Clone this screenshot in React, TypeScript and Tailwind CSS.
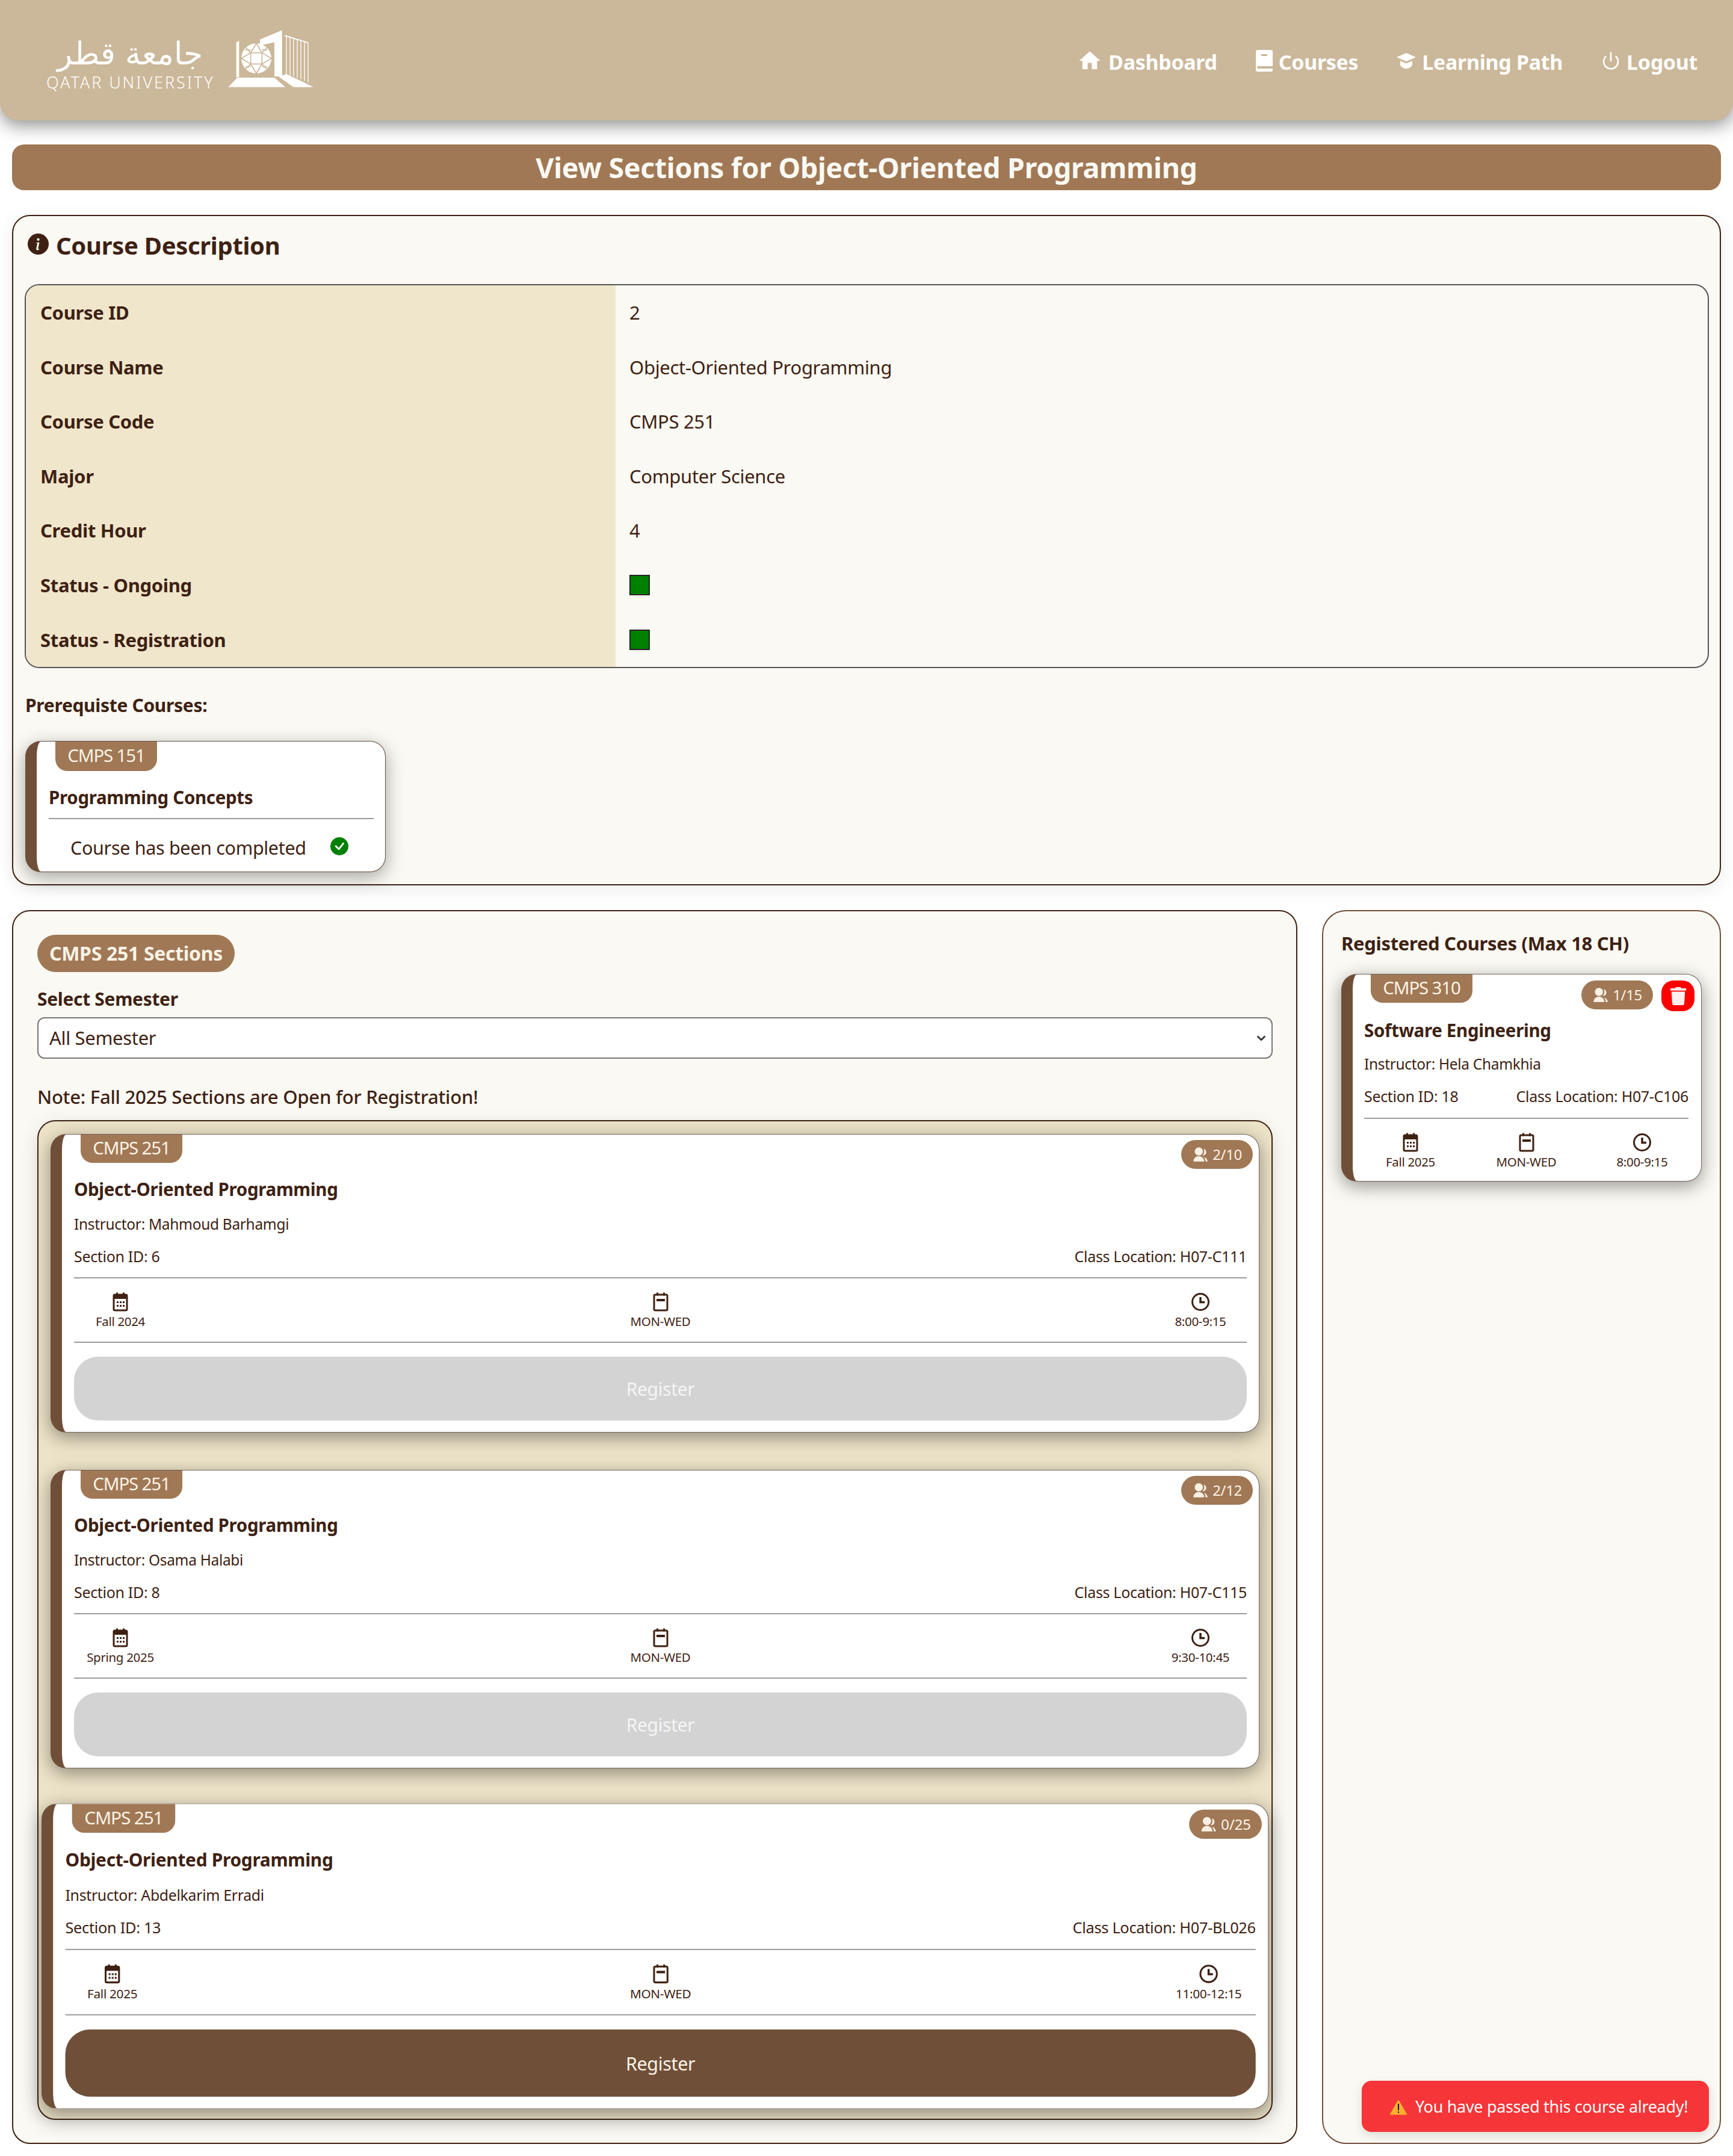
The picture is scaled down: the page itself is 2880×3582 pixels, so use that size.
import React from "react";
import { ChevronDown, Power } from "lucide-react";
import { BsInfoCircleFill, BsCheckCircleFill } from "react-icons/bs";
import { FaTrash } from "react-icons/fa";
import { MdHome } from "react-icons/md";
import { RiGroupFill } from "react-icons/ri";

// Calendar with the little date grid
const CalendarGrid = ({ size = 32 }: { size?: number }) => (
  <svg width={size} height={size} viewBox="0 0 32 32" fill="none">
    <rect x="5" y="4" width="22" height="26" rx="2" stroke="#3E2112" strokeWidth="3" />
    <rect x="5" y="4" width="22" height="7" fill="#3E2112" />
    <rect x="9" y="0.5" width="3" height="5" fill="#3E2112" />
    <rect x="20" y="0.5" width="3" height="5" fill="#3E2112" />
    <g fill="#3E2112">
      <rect x="10" y="15" width="3" height="3" />
      <rect x="15" y="15" width="3" height="3" />
      <rect x="20" y="15" width="3" height="3" />
      <rect x="10" y="21" width="3" height="3" />
      <rect x="15" y="21" width="3" height="3" />
      <rect x="20" y="21" width="3" height="3" />
    </g>
  </svg>
);

// Calendar with one bar, used for the days
const CalendarBar = ({ size = 32 }: { size?: number }) => (
  <svg width={size} height={size} viewBox="0 0 32 32" fill="none">
    <rect x="5" y="4" width="22" height="26" rx="2" stroke="#3E2112" strokeWidth="3" />
    <rect x="9" y="0.5" width="3" height="5" fill="#3E2112" />
    <rect x="20" y="0.5" width="3" height="5" fill="#3E2112" />
    <rect x="9" y="11" width="14" height="4" fill="#3E2112" />
  </svg>
);

const ClockIcon = ({ size = 32 }: { size?: number }) => (
  <svg width={size} height={size} viewBox="0 0 32 32" fill="none">
    <circle cx="16" cy="16" r="13.5" stroke="#3E2112" strokeWidth="3" />
    <path d="M16 8v8.5h7" stroke="#3E2112" strokeWidth="3.5" />
  </svg>
);

const BookIcon = () => (
  <svg width="28" height="36" viewBox="0 0 28 36" fill="white">
    <path d="M3 0h22a3 3 0 0 1 3 3v24H4a2 2 0 0 0 0 4h24v3a2 2 0 0 1-2 2H3a3 3 0 0 1-3-3V3a3 3 0 0 1 3-3z" />
    <rect x="9" y="7" width="10" height="3" fill="#CBB799" />
  </svg>
);

// Cap without the tassel: a diamond over a bowl
const CapIcon = () => (
  <svg width="32" height="26" viewBox="0 0 32 26" fill="white">
    <path d="M16 0 32 7 16 14 0 7z" />
    <path d="M6 13l10 4.5L26 13v7c-2 4-7 6-10 6s-8-2-10-6z" />
  </svg>
);

const WarningIcon = () => (
  <svg width="30" height="26" viewBox="0 0 30 26">
    <path d="M15 1 29 25H1z" fill="#FFB02E" stroke="#FFB02E" strokeLinejoin="round" />
    <rect x="14" y="7" width="2" height="11" fill="#111" />
    <rect x="14" y="20" width="2" height="2.5" fill="#111" />
  </svg>
);

// University emblem, coordinates taken from the reference crop
const Emblem = () => (
  <svg width="148" height="100" viewBox="940 25 444 300" fill="white">
    <path d="M1108 78 1218 32V262H1180V92L1108 108z" />
    <path d="M990 92 1004 85V266H990z" />
    <path d="M950 315 995 268H1180L1235 315z" />
    <path d="M1200 262 1240 250 1375 315H1275z" />
    <path d="M1232 55 1350 92V97L1232 62z" />
    <g stroke="white" strokeWidth="4">
      <path d="M1240 60V250M1258 66V255M1276 72V262M1294 78V270M1312 84V276M1330 90V284M1348 94V292" />
    </g>
    <circle cx="1090" cy="172" r="75" />
    <g stroke="#CBB799" strokeWidth="5" fill="none">
      <rect x="1062" y="144" width="56" height="56" />
      <path d="M1090 97 1062 144 1015 172 1062 200 1090 247 1118 200 1165 172 1118 144z" />
      <path d="M1037 119 1062 144M1143 119 1118 144M1037 225 1062 200M1143 225 1118 200" />
      <path d="M1035 130H1062M1118 130H1145M1035 214H1062M1118 214H1145" />
    </g>
  </svg>
);

const Logo = () => (
  <div className="self-start h-[100px] flex items-start ml-[77px] mt-[48px] gap-[21px] text-white">
    <div className="w-[278px] mt-[10px]">
      <div dir="rtl" lang="ar" className="h-[62px] text-[52px] leading-[62px] font-extralight text-center whitespace-nowrap [font-family:'DejaVu_Sans',sans-serif]">
        جامعة قطر
      </div>
      <div className="mt-[3px] text-[27px] leading-[28px] font-light tracking-[2.9px] whitespace-nowrap">QATAR UNIVERSITY</div>
    </div>
    <Emblem />
  </div>
);

const NavItem = ({ icon, label }: { icon: React.ReactNode; label: string }) => (
  <div className="flex items-center gap-[10px] text-white">
    <span className="-mt-[4px]">{icon}</span>
    <span className="text-[34px] font-bold">{label}</span>
  </div>
);

const Row = ({ label, children }: { label: string; children: React.ReactNode }) => (
  <div className="flex h-[90.6px]">
    <div className="w-[980px] bg-[#F0E6CC] pl-[24px] flex items-center text-[31px] font-bold">{label}</div>
    <div className="flex-1 pl-[23px] flex items-center text-[31px]">{children}</div>
  </div>
);

const StatusBox = () => <div className="w-[34px] h-[34px] bg-[#008000] border-2 border-[#222]" />;

const MetaItem = ({ icon, label }: { icon: React.ReactNode; label: string }) => (
  <div className="w-[154px] flex flex-col items-center">
    {icon}
    <span className="text-[20.5px] leading-[32px] whitespace-nowrap">{label}</span>
  </div>
);

const Pill = ({ count }: { count: string }) => (
  <div className="h-[48px] px-[18px] rounded-full bg-[#A07855] text-[#FAF3E6] text-[24px] flex items-center gap-[7px]">
    <RiGroupFill size={27} color="#FAEFE3" />
    {count}
  </div>
);

const CodeBadge = ({ code, tall }: { code: string; tall?: boolean }) => (
  <div
    className={`ml-[11px] w-[169px] pb-[3px] rounded-b-[20px] bg-[#A07855] text-[#FAF3E6] text-[29.5px] tracking-[-0.04em] flex items-center justify-center ${
      tall ? "h-[49px]" : "h-[47px]"
    }`}
  >
    {code}
  </div>
);

type Section = {
  instructor: string;
  id: number;
  location: string;
  semester: string;
  time: string;
  count: string;
  open?: boolean;
};

const SectionCard = ({ s }: { s: Section }) => (
  <div
    className={`rounded-[26px] bg-white border border-[#3E2112]/70 border-l-[19px] border-l-[#704F39] shadow-[0_8px_30px_rgba(0,0,0,0.4)] pl-[20px] pr-[20px] pb-[19px] ${
      s.open ? "scale-[1.015]" : ""
    }`}
  >
    <div className="flex justify-between h-[47px]">
      <CodeBadge code="CMPS 251" />
      <div className="mt-[9px] -mr-[10px]">
        <Pill count={s.count} />
      </div>
    </div>
    <div className="mt-[22px] h-[44px] leading-[44px] text-[29.5px] font-bold">Object-Oriented Programming</div>
    <div className="mt-[18px] h-[36px] leading-[36px] text-[24.5px]">Instructor: {s.instructor}</div>
    <div className="mt-[17px] h-[36px] leading-[36px] text-[25px] flex justify-between">
      <span>Section ID: {s.id}</span>
      <span>Class Location: {s.location}</span>
    </div>
    <div className="mt-[17px] h-[2px] bg-[#9b9b9b]" />
    <div className="mt-[23px] flex justify-between">
      <MetaItem icon={<CalendarGrid />} label={s.semester} />
      <MetaItem icon={<CalendarBar />} label="MON-WED" />
      <MetaItem icon={<ClockIcon />} label={s.time} />
    </div>
    <div className="mt-[18px] h-[2px] bg-[#9b9b9b]" />
    <button
      className={`mt-[23px] w-full rounded-[40px] text-[30px] ${
        s.open ? "h-[110px] bg-[#704F39] text-[#FAF3E6]" : "h-[106px] bg-[#D3D3D3] text-[#F5F5F5]"
      }`}
    >
      Register
    </button>
  </div>
);

const sections: Section[] = [
  { instructor: "Mahmoud Barhamgi", id: 6, location: "H07-C111", semester: "Fall 2024", time: "8:00-9:15", count: "2/10" },
  { instructor: "Osama Halabi", id: 8, location: "H07-C115", semester: "Spring 2025", time: "9:30-10:45", count: "2/12" },
  { instructor: "Abdelkarim Erradi", id: 13, location: "H07-BL026", semester: "Fall 2025", time: "11:00-12:15", count: "0/25", open: true },
];

const App: React.FC = () => {
  return (
    <div className="relative w-[2880px] h-[3582px] bg-white text-[#3E2112] tracking-[-0.02em] [font-family:'Noto_Sans',sans-serif]">
      {/* Navbar */}
      <div className="h-[200px] bg-[#CBB799] rounded-b-[30px] shadow-[0_8px_30px_rgba(0,0,0,0.45)] flex justify-between">
        <Logo />
        <div className="flex items-center gap-[64px] pr-[59px] pt-[6px]">
          <NavItem icon={<MdHome size={42} />} label="Dashboard" />
          <NavItem icon={<BookIcon />} label="Courses" />
          <NavItem icon={<CapIcon />} label="Learning Path" />
          <NavItem icon={<Power size={32} strokeWidth={2} />} label="Logout" />
        </div>
      </div>

      {/* Page title */}
      <div className="mt-[40px] mx-[20px] h-[76px] pt-[2px] rounded-[20px] bg-[#A07855] text-[#FAF9F3] text-[46.5px] font-bold flex items-center justify-center">
        View Sections for Object-Oriented Programming
      </div>

      {/* Course description */}
      <div className="mt-[41px] mx-[20px] h-[1114px] rounded-[30px] border-2 border-[#3E2112] bg-[#FAF9F3] pl-[19px] pr-[18px] shadow-[0_8px_30px_rgba(0,0,0,0.08)]">
        <div className="h-[98px] mb-[15px] pl-[5px] flex items-center gap-[12px] text-[40px] font-bold">
          <BsInfoCircleFill size={35} className="-mt-[6px]" />
          Course Description
        </div>
        <div className="rounded-[24px] border-2 border-[#555] overflow-hidden bg-[#FAF9F3]">
          <Row label="Course ID">2</Row>
          <Row label="Course Name">Object-Oriented Programming</Row>
          <Row label="Course Code">CMPS 251</Row>
          <Row label="Major">Computer Science</Row>
          <Row label="Credit Hour">4</Row>
          <Row label="Status - Ongoing"><StatusBox /></Row>
          <Row label="Status - Registration"><StatusBox /></Row>
        </div>
        <div className="mt-[40px] h-[44px] leading-[44px] pl-[1px] text-[30px] font-bold">Prerequiste Courses:</div>
        <div className="mt-[37px] ml-[1px] w-[599px] h-[218px] rounded-[26px] bg-white border border-[#3E2112]/80 border-l-[19px] border-l-[#704F39] shadow-[0_8px_30px_rgba(0,0,0,0.35)] pl-[20px] pr-[19px]">
          <CodeBadge code="CMPS 151" tall />
          <div className="mt-[23px] h-[42px] leading-[42px] text-[29.5px] font-bold">Programming Concepts</div>
          <div className="mt-[13px] h-[2px] bg-[#9b9b9b]" />
          <div className="mt-[25px] pl-[36px] flex items-center gap-[40px] text-[30.5px]">
            <span>Course has been completed</span>
            <BsCheckCircleFill size={30} color="#008000" className="-mt-[6px]" />
          </div>
        </div>
      </div>

      <div className="mt-[41px] mx-[20px] flex gap-[41px]">
        {/* Sections list */}
        <div className="w-[2136px] h-[2050px] rounded-[30px] border-2 border-[#3E2112] bg-[#FAF9F3] pt-[39px] pl-[40px] pr-[39px]">
          <div className="w-fit h-[62px] px-[20px] rounded-full bg-[#A07855] text-[#FAF3E6] text-[32px] font-bold flex items-center">
            CMPS 251 Sections
          </div>
          <div className="mt-[23px] h-[44px] leading-[44px] text-[30px] font-bold">Select Semester</div>
          <div className="relative mt-[8px]">
            <select className="appearance-none w-full h-[69px] rounded-[12px] border-2 border-[#777] bg-white pl-[18px] text-[31px]">
              <option>All Semester</option>
            </select>
            <ChevronDown size={22} strokeWidth={3} color="#333" className="absolute right-[8px] top-[24px]" />
          </div>
          <div className="mt-[41px] h-[44px] leading-[44px] text-[31.2px] font-medium">Note: Fall 2025 Sections are Open for Registration!</div>
          <div className="mt-[17px] rounded-[30px] border-2 border-[#3E2112] bg-[#EDE3C8] pt-[21px] pb-[20px] pl-[20px] pr-[20px] flex flex-col gap-[62px] shadow-[0_8px_30px_rgba(0,0,0,0.12)]">
            {sections.map((s) => (
              <SectionCard key={s.id} s={s} />
            ))}
          </div>
        </div>

        {/* Registered courses */}
        <div className="relative w-[663px] h-[2050px] rounded-[40px] border-2 border-[#704F39] bg-[#FAF9F3] pl-[30px] pr-[30px]">
          <div className="mt-[31px] h-[44px] leading-[44px] text-[31px] font-bold whitespace-nowrap">Registered Courses (Max 18 CH)</div>
          <div className="mt-[29px] w-[599px] h-[345px] rounded-[26px] bg-white border border-[#3E2112]/70 border-l-[19px] border-l-[#704F39] shadow-[0_8px_30px_rgba(0,0,0,0.4)] pl-[19px] pr-[21px]">
            <div className="flex h-[48px]">
              <CodeBadge code="CMPS 310" />
              <div className="ml-auto mt-[10px] flex gap-[14px] -mr-[10px]">
                <Pill count="1/15" />
                <div className="w-[55px] h-[51px] rounded-[20px] bg-[#FF0000] flex items-center justify-center">
                  <FaTrash size={30} color="#FFF0F0" />
                </div>
              </div>
            </div>
            <div className="mt-[23px] h-[44px] leading-[44px] text-[29.5px] font-bold">Software Engineering</div>
            <div className="mt-[16px] h-[36px] leading-[36px] text-[24.5px]">Instructor: Hela Chamkhia</div>
            <div className="mt-[17px] h-[36px] leading-[36px] text-[25px] flex justify-between whitespace-nowrap">
              <span>Section ID: 18</span>
              <span>Class Location: H07-C106</span>
            </div>
            <div className="mt-[18px] h-[2px] bg-[#9b9b9b]" />
            <div className="mt-[23px] flex justify-between">
              <MetaItem icon={<CalendarGrid />} label="Fall 2025" />
              <MetaItem icon={<CalendarBar />} label="MON-WED" />
              <MetaItem icon={<ClockIcon />} label="8:00-9:15" />
            </div>
          </div>
          {/* Toast */}
          <div className="absolute right-[18px] bottom-[18px] w-[577px] h-[85px] pt-[2px] rounded-[16px] bg-[#F63538] text-white text-[27px] flex items-center pl-[46px] gap-[13px] shadow-[0_6px_16px_rgba(0,0,0,0.12)]">
            <WarningIcon />
            <span>You have passed this course already!</span>
          </div>
        </div>
      </div>
    </div>
  );
};

export default App;
